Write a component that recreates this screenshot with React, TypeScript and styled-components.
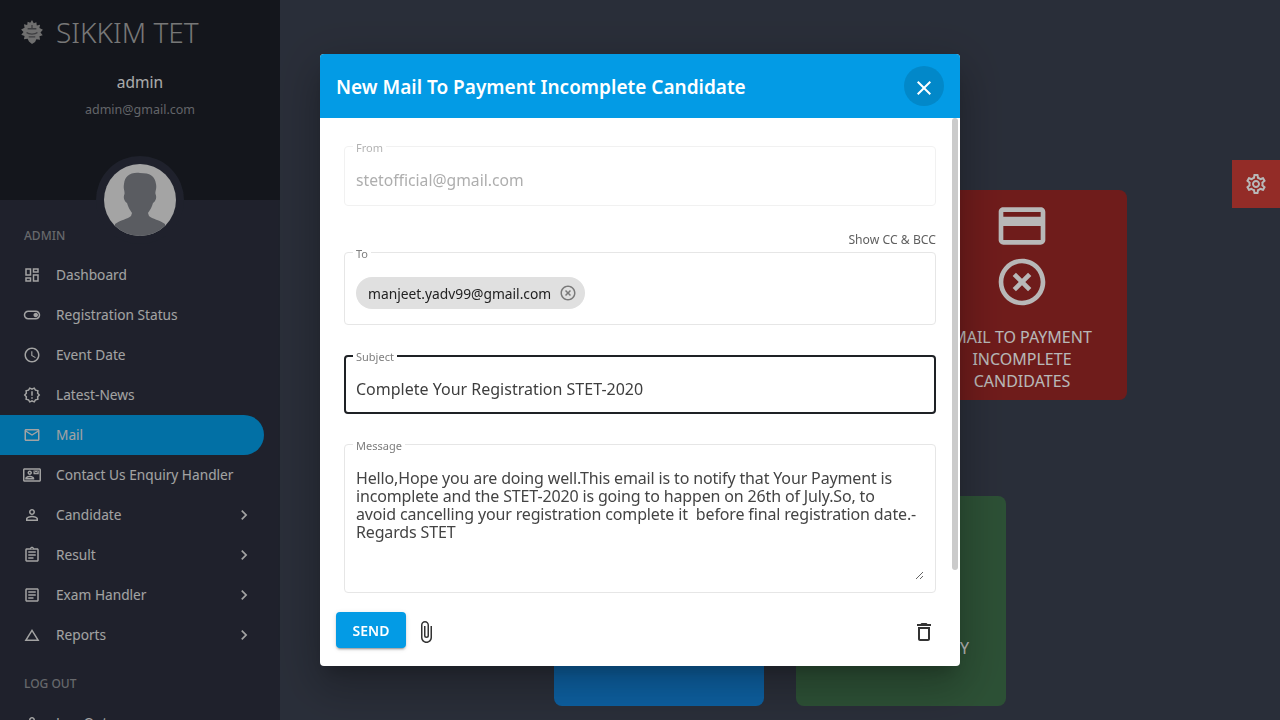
import styled, { createGlobalStyle } from "styled-components";
import type { IconType } from "react-icons";
import {
  MdAttachFile,
  MdChevronRight,
  MdClose,
  MdHighlightOff,
  MdOutlineAccessTime,
  MdOutlineArticle,
  MdOutlineAssignment,
  MdOutlineChangeHistory,
  MdOutlineContactMail,
  MdOutlineCreditCard,
  MdOutlineDashboard,
  MdOutlineDelete,
  MdOutlineEmail,
  MdOutlineNewReleases,
  MdOutlinePermIdentity,
  MdOutlineSettings,
  MdOutlineToggleOn,
} from "react-icons/md";

const FONT = `"Noto Sans", "Open Sans", sans-serif`;

const GlobalStyle = createGlobalStyle`
  html, body {
    margin: 0;
    height: 100%;
    overflow: hidden;
    font-family: ${FONT};
  }
  * {
    box-sizing: border-box;
  }
`;

const Page = styled.div`
  display: flex;
  width: 1280px;
  height: 720px;
  overflow: hidden;
  background: #3a404f;
`;

const Sidebar = styled.aside`
  flex: 0 0 280px;
  height: 720px;
  overflow: hidden;
  position: relative;
  background: #2b2f3d;
  color: #eee;
`;

const SideHeader = styled.header`
  height: 200px;
  background: #1c1f27;
  display: flex;
  flex-direction: column;
  align-items: center;
`;

const Brand = styled.div`
  align-self: stretch;
  height: 64px;
  display: flex;
  align-items: center;
  gap: 12px;
  padding-left: 20px;
  font-size: 28px;
  font-weight: 300;
  color: #a6a6a6;
`;

const UserName = styled.div`
  font-size: 15.500px;
  line-height: 20px;
  margin-top: 8px;
  color: #fff;
  opacity: 0.92;
`;

const UserMail = styled.div`
  font-size: 12.500px;
  line-height: 16px;
  margin-top: 10px;
  color: #8a8c92;
`;

const AvatarRing = styled.div`
  position: absolute;
  left: 96px;
  top: 156px;
  width: 88px;
  height: 88px;
  padding: 8px;
  border-radius: 50%;
  background: #2b2f3d;
`;

const Nav = styled.nav`
  padding: 15px 16px 0 0;
`;

const GroupLabel = styled.div<{ $top?: number }>`
  height: 40px;
  margin-top: ${(p) => p.$top ?? 0}px;
  padding-left: 24px;
  display: flex;
  align-items: center;
  font-size: 12px;
  font-weight: 500;
  color: #8f9196;
`;

const NavItem = styled.div<{ $active?: boolean }>`
  height: 40px;
  display: flex;
  align-items: center;
  padding: 0 10px 0 23px;
  border-radius: 0 20px 20px 0;
  font-size: 13.700px;
  background: ${(p) => (p.$active ? "#039be5" : "transparent")};
  color: #e2e2e2;

  > svg:first-child {
    flex: 0 0 18px;
    margin-right: 15px;
  }
`;

const NavText = styled.span`
  flex: 1;
  padding-bottom: 2px;
`;

const Main = styled.main`
  flex: 1;
  padding-top: 190px;
  display: flex;
  flex-wrap: wrap;
  justify-content: center;
  align-content: flex-start;
  gap: 96px 32px;
  padding-left: 153px;
  padding-right: 153px;
`;

const Card = styled.div<{ $bg: string }>`
  width: 210px;
  height: 210px;
  border-radius: 8px;
  padding-top: 8px;
  background: ${(p) => p.$bg};
  color: #fff;
  display: flex;
  flex-direction: column;
  align-items: center;
  text-align: center;
`;

const CardLabel = styled.div<{ $top?: number }>`
  margin-top: ${(p) => p.$top ?? 16}px;
  font-size: 16px;
  line-height: 22px;
`;

const SettingsTab = styled.div`
  position: absolute;
  right: 0;
  top: 160px;
  width: 48px;
  height: 48px;
  background: #cc3d36;
  color: #fff;
  display: flex;
  align-items: center;
  justify-content: center;
`;

const Backdrop = styled.div`
  position: fixed;
  inset: 0;
  background: rgba(0, 0, 0, 0.28);
  display: flex;
  align-items: center;
  justify-content: center;
`;

const Dialog = styled.section`
  position: relative;
  width: 640px;
  height: 612px;
  border-radius: 4px;
  overflow: hidden;
  background: #fff;
  display: flex;
  flex-direction: column;
  box-shadow: 0 11px 15px -7px rgba(0, 0, 0, 0.2),
    0 24px 38px 3px rgba(0, 0, 0, 0.14), 0 9px 46px 8px rgba(0, 0, 0, 0.12);
`;

const DialogHead = styled.header`
  flex: 0 0 64px;
  background: #039be5;
  color: #fff;
  display: flex;
  align-items: center;
  justify-content: space-between;
  padding: 0 16px;
`;

const DialogTitle = styled.h2`
  margin: 1px 0 0;
  font-size: 19px;
  font-weight: 600;
`;

const CloseButton = styled.button`
  width: 40px;
  height: 40px;
  padding: 3px 0 0;
  border: 0;
  border-radius: 50%;
  color: #fff;
  background: rgba(0, 0, 0, 0.12);
  display: flex;
  align-items: center;
  justify-content: center;
`;

const DialogBody = styled.div`
  flex: 0 0 476px;
  padding: 20px 24px 0;
  overflow: hidden;
`;

const ScrollThumb = styled.div`
  position: absolute;
  right: 2px;
  top: 64px;
  width: 6px;
  height: 452px;
  border-radius: 3px;
  background: #cbcbcb;
`;

const Field = styled.fieldset<{
  $h: number;
  $top?: number;
  $focus?: boolean;
  $dim?: boolean;
}>`
  display: block;
  margin: ${(p) => p.$top ?? 0}px 0 0;
  min-width: 0;
  height: ${(p) => p.$h}px;
  border-radius: 4px;
  border: ${(p) =>
    p.$focus ? "2px solid #1e2125" : `1px solid ${p.$dim ? "#f1f1f1" : "#e6e6e6"}`};
  padding: 0 11px 0 ${(p) => (p.$focus ? 10 : 11)}px;
`;

const FieldLabel = styled.legend<{ $dim?: boolean }>`
  margin-left: -3px;
  padding: 3px 3px 0;
  font-size: 11px;
  line-height: 14px;
  color: ${(p) => (p.$dim ? "#b3b3b3" : "#7d7d7d")};
`;

const TextInput = styled.input<{ $dim?: boolean; $h: number; $size: number }>`
  display: block;
  width: 100%;
  height: ${(p) => p.$h}px;
  margin: 0;
  padding: 0;
  border: 0;
  outline: 0;
  background: transparent;
  font: ${(p) => p.$size}px ${FONT};
  color: ${(p) => (p.$dim ? "#aeaeae" : "#3e3e3e")};
`;

const CcRow = styled.div`
  margin: 27px 0 -3px;
  font-size: 12.200px;
  line-height: 14px;
  text-align: right;
  color: #5f5f5f;
`;

const Chip = styled.div`
  display: inline-flex;
  align-items: center;
  gap: 8px;
  height: 32px;
  margin-top: 16px;
  padding: 0 8px 0 12px;
  border-radius: 16px;
  background: #e0e0e0;
  font-size: 13.800px;
  color: #222;

  svg {
    color: #7a7a7a;
  }
`;

const Message = styled.textarea`
  display: block;
  width: 100%;
  height: 127px;
  margin: 0;
  padding: 16px 0 0;
  border: 0;
  outline: 0;
  resize: vertical;
  overflow: hidden;
  font: 16px/18px ${FONT};
  letter-spacing: -0.15px;
  color: #444;
`;

const DialogActions = styled.footer`
  flex: 1;
  display: flex;
  align-items: center;
  padding: 0 24px 0 16px;
  color: #333;
`;

const SendButton = styled.button`
  width: 70px;
  height: 36px;
  margin-right: 8px;
  border: 0;
  border-radius: 4px;
  background: #039be5;
  color: #fff;
  font: 600 14px ${FONT};
  box-shadow: 0 3px 1px -2px rgba(0, 0, 0, 0.2), 0 2px 2px rgba(0, 0, 0, 0.14),
    0 1px 5px rgba(0, 0, 0, 0.12);
`;

const ActionIcon = styled.span`
  display: flex;
  margin-top: 4px;
`;

const Spacer = styled.div`
  flex: 1;
`;

type Item = { label: string; icon: IconType; active?: boolean; more?: boolean };

const items: Item[] = [
  { label: "Dashboard", icon: MdOutlineDashboard },
  { label: "Registration Status", icon: MdOutlineToggleOn },
  { label: "Event Date", icon: MdOutlineAccessTime },
  { label: "Latest-News", icon: MdOutlineNewReleases },
  { label: "Mail", icon: MdOutlineEmail, active: true },
  { label: "Contact Us Enquiry Handler", icon: MdOutlineContactMail },
  { label: "Candidate", icon: MdOutlinePermIdentity, more: true },
  { label: "Result", icon: MdOutlineAssignment, more: true },
  { label: "Exam Handler", icon: MdOutlineArticle, more: true },
  { label: "Reports", icon: MdOutlineChangeHistory, more: true },
];

const MESSAGE =
  "Hello,Hope you are doing well.This email is to notify that Your Payment is\nincomplete and the STET-2020 is going to happen on 26th of July.So, to\navoid cancelling your registration complete it  before final registration date.-\nRegards STET";

function Emblem() {
  return (
    <svg width="24" height="24" viewBox="1.500 1 21 22">
      <path
        fill="#9a9a9a"
        d="M12 1l1.600 3 2.400-1 .4 3 3-.6-.6 3 3.200 1.600-2.200 2.400 2 2.600-3 1 .6 3-3.400-.4-1.200 2.600L12 23l-2.800-2.200-1.200-2.600-3.400.4.6-3-3-1 2-2.600L2 9.600 5.200 8l-.6-3 3 .6.4-3 2.400 1z"
      />
      <path
        fill="none"
        stroke="#55565a"
        strokeWidth="1.200"
        d="M8 9h8M7 12.500c2 2 8 2 10 0M9 16.500h6M12 5.500v3"
      />
    </svg>
  );
}

function Avatar() {
  return (
    <svg width="72" height="72" viewBox="0 0 72 72">
      <defs>
        <clipPath id="avatar-clip">
          <circle cx="36" cy="36" r="36" />
        </clipPath>
      </defs>
      <g clipPath="url(#avatar-clip)">
        <rect width="72" height="72" fill="#e3e3e4" />
        <path
          fill="#7d8087"
          d="M36 9C26 8 21 12 20 20c-1 5 1 7 .5 10-1.500 3-.5 7 2.500 9 1 4 3 7 5 10l-1 3c-3 3-11 4-16 8v12h50V60c-5-4-13-5-16-8l-1-3c2-3 4-6 5-10 3-2 4-6 2.500-9-.5-3 1.500-5 .5-10C51 12 46 9 36 9z"
        />
      </g>
    </svg>
  );
}

export default function App() {
  return (
    <Page>
      <GlobalStyle />
      <Sidebar>
        <SideHeader>
          <Brand>
            <Emblem />
            SIKKIM TET
          </Brand>
          <UserName>admin</UserName>
          <UserMail>admin@gmail.com</UserMail>
        </SideHeader>
        <AvatarRing>
          <Avatar />
        </AvatarRing>
        <Nav>
          <GroupLabel>ADMIN</GroupLabel>
          {items.map(({ label, icon: Icon, active, more }) => (
            <NavItem key={label} $active={active}>
              <Icon size={18} />
              <NavText>{label}</NavText>
              {more && <MdChevronRight size={20} />}
            </NavItem>
          ))}
          <GroupLabel $top={8}>LOG OUT</GroupLabel>
          <NavItem>
            <MdOutlinePermIdentity size={18} />
            <NavText>Log Out</NavText>
          </NavItem>
        </Nav>
      </Sidebar>

      <Main>
        <Card $bg="#1f7a4d" />
        <Card $bg="#8a5a12" />
        <Card $bg="#9a2726">
          <MdOutlineCreditCard size={56} />
          <MdHighlightOff size={56} />
          <CardLabel>
            MAIL TO PAYMENT
            <br />
            INCOMPLETE
            <br />
            CANDIDATES
          </CardLabel>
        </Card>
        <Card $bg="#1284dd" />
        <Card $bg="#3e6f4a">
          <MdOutlineCreditCard size={56} />
          <MdHighlightOff size={56} />
          <CardLabel $top={21}>MAIL TO ALREADY</CardLabel>
        </Card>
      </Main>

      <SettingsTab>
        <MdOutlineSettings size={24} />
      </SettingsTab>

      <Backdrop>
        <Dialog>
          <DialogHead>
            <DialogTitle>New Mail To Payment Incomplete Candidate</DialogTitle>
            <CloseButton>
              <MdClose size={24} />
            </CloseButton>
          </DialogHead>

          <DialogBody>
            <Field $h={68} $dim>
              <FieldLabel $dim>From</FieldLabel>
              <TextInput $dim $h={50} $size={15.7} readOnly value="stetofficial@gmail.com" />
            </Field>
            <CcRow>Show CC &amp; BCC</CcRow>
            <Field $h={81}>
              <FieldLabel>To</FieldLabel>
              <Chip>
                manjeet.yadv99@gmail.com
                <MdHighlightOff size={18} />
              </Chip>
            </Field>
            <Field $h={67} $top={22} $focus>
              <FieldLabel>Subject</FieldLabel>
              <TextInput $h={50} $size={16} readOnly value="Complete Your Registration STET-2020" />
            </Field>
            <Field $h={157} $top={22}>
              <FieldLabel>Message</FieldLabel>
              <Message readOnly value={MESSAGE} />
            </Field>
          </DialogBody>
          <ScrollThumb />

          <DialogActions>
            <SendButton>SEND</SendButton>
            <ActionIcon>
              <MdAttachFile size={24} />
            </ActionIcon>
            <Spacer />
            <ActionIcon>
              <MdOutlineDelete size={24} />
            </ActionIcon>
          </DialogActions>
        </Dialog>
      </Backdrop>
    </Page>
  );
}
